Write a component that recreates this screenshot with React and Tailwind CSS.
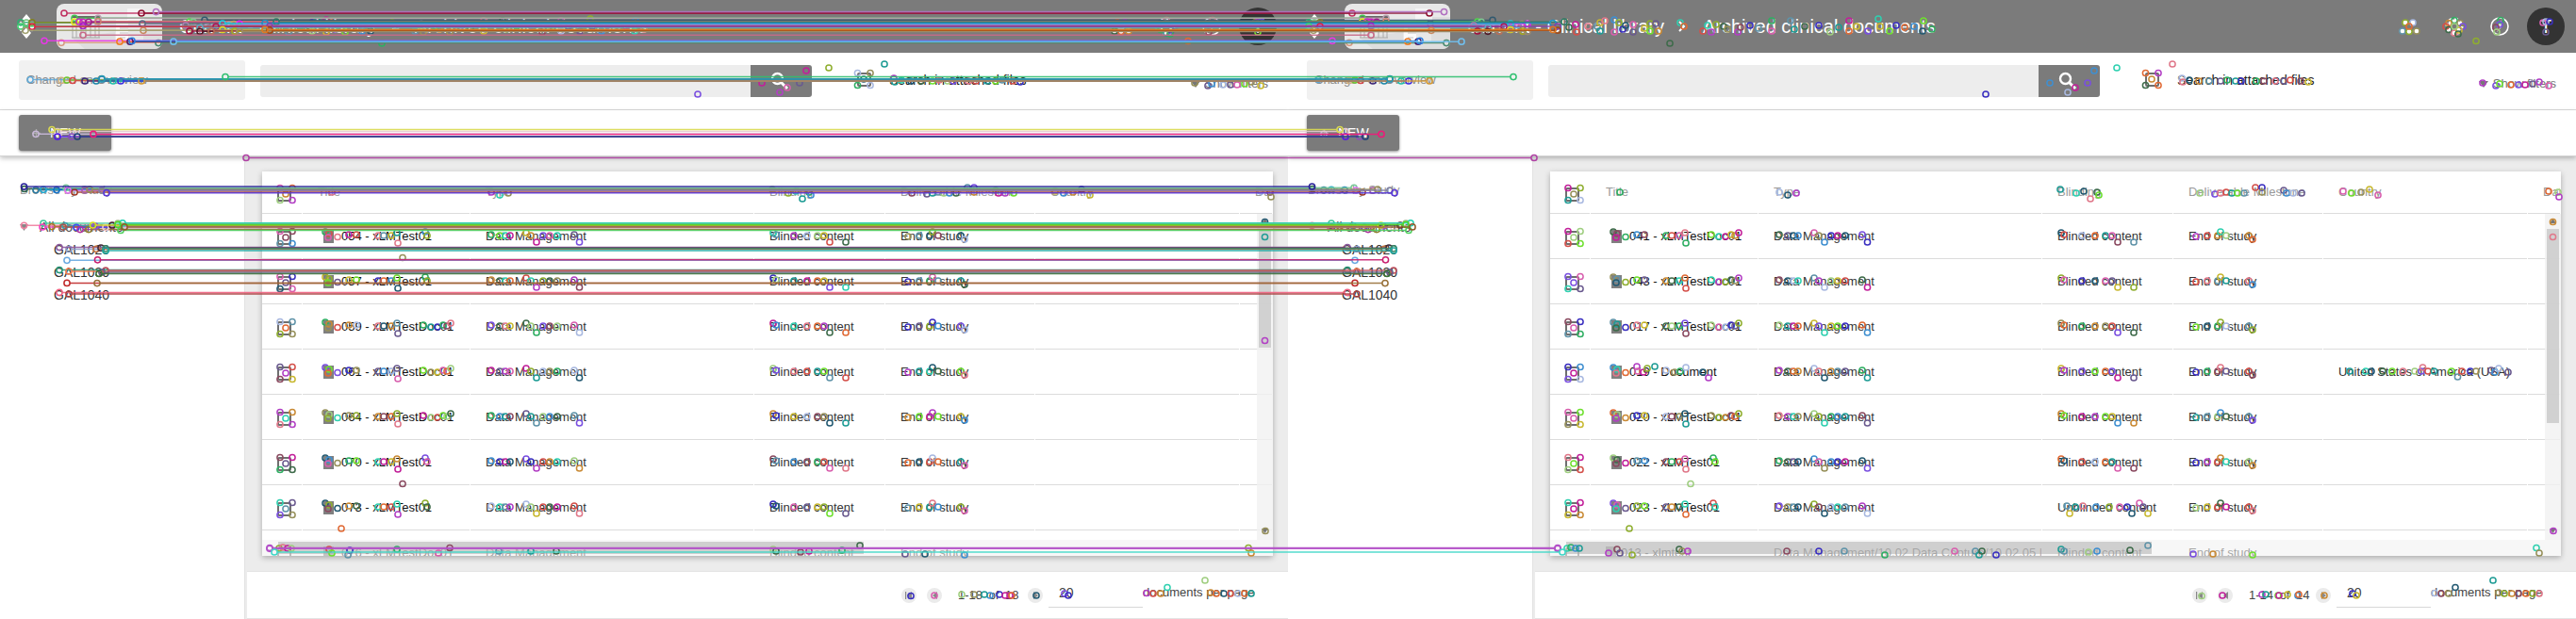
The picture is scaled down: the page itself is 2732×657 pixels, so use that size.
import React from "react";

const PANEL = 1366;

const PALETTE = [
  "#2fae62", "#b23fc4", "#3f8fd0", "#d4504a", "#8fae2f", "#7a4fe0", "#1f9c95", "#c98a35",
  "#d85fae", "#3e6b4a", "#a8b8e0", "#6fe02f", "#8a4a60", "#2fd0b0", "#3a2fc0", "#e0788a",
  "#96905a", "#c2209a", "#5f93a8", "#e06a35", "#6a5a8f", "#9fce80", "#245a72", "#c8b830",
];

// Matched keypoints: [x, y, colour]; each is joined to its twin in the second panel.
const MATCHES = [
  [68, 14, "#c03060"], [150, 14, "#8b1030"], [165.5, 12.6, "#b06fc0"],
  [79, 19.3, "#40c850"], [104, 19.3, "#b8a0b0"], [217, 21.4, "#31596f"], [201, 23, "#4fd84a"], [205, 23.3, "#80c890"],
  [22, 23.8, "#2fae72"], [28, 24, "#77c080"], [34, 23.8, "#808020"], [79, 23.2, "#e6e620"], [84, 23.2, "#c030c0"],
  [88, 23.4, "#d020c0"], [94, 23.3, "#a0208a"], [104, 22.8, "#d08070"], [243, 26.5, "#60b8d8"], [248, 25.5, "#c0a860"],
  [151, 25, "#5a6a80"], [254, 25.4, "#ee22ee"], [236, 25, "#20d0e0"], [293, 23.2, "#2f7a62"], [281, 24.6, "#1e8fc0"],
  [88, 27.5, "#a020c8"], [197, 27, "#a880b0"], [22, 28, "#3fd070"], [34, 28.2, "#dd2045"], [229, 28.3, "#b01050"],
  [286, 28, "#8a3fa8"], [212, 29.5, "#5fa8c0"], [236, 31.5, "#e0d820"], [152, 32.3, "#c88a60"], [27, 32.3, "#a0a070"],
  [201, 33, "#a01040"], [212, 33.3, "#501828"], [224, 33.2, "#b87058"], [249, 33.2, "#a8a820"], [254, 33.6, "#9a8a70"],
  [286, 32.2, "#a04a18"], [281, 31.4, "#e07820"], [88, 37.3, "#c86a88"],
  [65, 45.3, "#d89a80"], [168, 45.6, "#4a8a70"], [47, 43.3, "#e838e8"], [127, 44.2, "#f07a20"], [138, 44.2, "#501a68"],
  [140, 43.4, "#2a80e0"], [184, 44.2, "#70c0f0"],
  [32, 84.6, "#60a8d8"], [65, 85.4, "#d0b080"], [71, 85, "#70c830"], [77, 85.5, "#d84848"], [90, 86, "#402878"],
  [102, 86, "#2088a8"], [108, 84, "#2078b8"], [120, 86, "#20c0a8"], [128, 86, "#4030e0"], [150, 85.9, "#d49a35"],
  [108, 83.7, "#2898b0"], [239, 81.6, "#30c070"],
  [38, 142.3, "#c8b8d8"], [61, 139.5, "#e4c8d0"], [55, 137.5, "#dada50"], [61, 145, "#5018e8"], [76, 145, "#8a50b8"],
  [82, 145, "#204078"], [99, 142.4, "#f0187a"],
  [261, 167.5, "#b040a4"],
  [26, 200.5, "#28604a"], [38, 201.6, "#2878a0"], [46, 201.3, "#20a8d0"], [60, 201.6, "#1070c8"], [70, 199.3, "#78c898"],
  [72, 202, "#e070f0"], [79, 204, "#a03a28"], [90, 202, "#a860a0"], [95, 201, "#98905a"], [108, 202, "#8080a0"],
  [25.5, 198, "#28209a"], [113, 204.7, "#5a38d8"],
  [25.5, 239.3, "#f080a0"], [46, 237, "#40c898"], [45, 241, "#f040c0"], [55, 240.6, "#a87828"], [69, 239.5, "#38a0a8"],
  [67, 241, "#a05850"], [81, 241.3, "#4050f0"], [85, 243.6, "#b030a0"], [94, 243.6, "#908030"], [101, 240, "#9850c8"],
  [112, 241.3, "#f0c8d0"], [119, 239, "#482030"], [125, 237, "#a8b890"], [128, 244.5, "#50d060"], [98.5, 239, "#d8e020"],
  [130, 236.8, "#20d0b0"], [125, 238.4, "#50d828"], [132, 240.9, "#905a2a"],
  [73, 264.4, "#90a0c8"], [63, 262.5, "#905aa0"], [102, 264.3, "#c07040"], [107, 263.2, "#402838"], [112, 263.8, "#3a8868"], [112, 266, "#20a8a0"],
  [71, 276.3, "#68a8e0"], [103.5, 275.8, "#c82070"],
  [63, 286.5, "#289878"], [73, 288, "#f07850"], [112, 287, "#c05060"], [108, 289, "#606088"], [105, 290.4, "#3a7038"],
  [71, 300.4, "#c02828"], [103, 300.6, "#987038"],
  [63, 310.4, "#f06080"], [73, 312, "#a84040"],
  [286, 581.5, "#b350c8"], [286, 582.3, "#b350c8"], [291, 586, "#40d8c8"],
];

const HEADER_PTS = [
  [298, 29], [305, 26], [306, 34], [318, 28], [328, 28], [331, 24], [331, 33], [336, 22], [346, 21], [351, 24], [346, 34],
  [355, 31], [358, 27], [366, 26], [366, 34], [378, 30], [384, 25], [384, 33], [390, 25], [393, 33], [405, 46], [416, 24],
  [420, 28], [440, 33], [445, 27], [449, 34], [454, 26], [462, 28], [466, 31], [477, 34], [480, 29], [490, 27], [499, 30],
  [513, 22], [513, 33], [533, 22], [537, 31], [548, 28], [563, 27], [575, 34], [584, 29], [595, 22], [595, 33], [603, 28],
  [615, 33], [626, 20], [628, 28], [638, 33], [645, 27], [654, 29], [664, 28], [674, 22], [673, 33], [683, 31],
  [1185, 24], [1193, 24], [1182, 33], [1189, 33.5], [1197, 33], [1189, 28], [1237, 21.5], [1231, 24.5], [1243, 24.5],
  [1228, 28], [1246, 28], [1231, 31.5], [1237, 35], [1242, 32], [1241, 36], [1237, 28], [1286, 21.5], [1285, 26],
  [1281, 29], [1282, 34], [1331, 24], [1334, 23], [1338, 23], [1334, 34], [1260, 43.5],
];

const SEARCH_PTS = [
  [740, 100], [808, 88], [848, 88], [827, 98], [835, 93], [855, 75], [879, 72], [938, 68],
  [909.5, 77.5], [923, 77.5], [909.5, 90.5], [923, 90.5], [916, 84],
  [948, 83], [949, 87], [956, 85], [966, 86], [977, 86], [989, 86], [996, 85], [1005, 86], [1011, 86], [1027, 86],
  [1035, 86], [1047, 86], [1056, 86], [1063, 85], [1074, 86], [1082, 87],
  [1267, 88], [1281, 91], [1285, 89], [1297, 90], [1305, 90], [1312, 90], [1320, 89], [1327, 87], [1337, 91],
];

const TABLE_HEAD_PTS = [
  [297, 199.5], [310, 199.5], [297, 212.5], [310, 212.5], [303, 206], [352, 204], [521, 204], [530, 207], [539, 205],
  [819, 201], [836, 205], [844, 203], [858, 204], [860, 207], [851, 211],
  [967, 205], [983, 206], [989, 205], [995, 204], [1001, 205], [1007, 205], [1014, 205], [1026, 199], [1033, 199],
  [1033, 204], [1056, 202], [1059, 205], [1066, 205], [1075, 205],
  [1119, 203], [1128, 205], [1138, 204], [1147, 201], [1156, 207], [1337, 203], [1347, 204], [1348, 209],
];

const ROW_COMMON = [
  [297, 245.5], [310, 245.5], [297, 258.5], [310, 258.5], [303, 252], [345, 246], [349, 248], [348, 252], [358, 251.5],
  [521, 249], [530, 250], [536, 250], [541, 250], [558, 247], [563, 250], [569, 257], [576, 250], [583, 250], [591, 250],
  [609, 249], [614.5, 257], [963, 251], [975, 250], [986, 250], [989, 246], [995, 250], [1019, 250], [1023, 254],
];
const ROW_BLIND = [[820, 247], [823, 249], [842, 250], [856, 250], [867, 250], [874, 250], [880, 257], [897, 257]];
const ROW_UNBLIND = [[826, 249], [829, 257], [835, 250], [843, 249], [857, 250], [871, 250], [882, 250], [890, 250], [895, 257], [903, 246], [907, 250], [912, 257]];
const ROW_XLM = [[370, 249], [378, 249], [401, 250], [407, 250], [415, 250], [421, 247], [422, 258]];
const ROW_01 = [[451, 246], [453, 250]];
const ROW_DOC01 = [[449, 249], [457, 251], [464, 251], [470, 249], [474, 250], [478, 247]];
const ROW_DOCUMENT = [[370, 245], [371, 250], [377, 251], [381, 247], [389, 245], [401, 249], [410, 251], [416, 250], [422, 246], [440, 251], [446, 257]];
const USA_PTS = [
  [1126, 250], [1143, 250], [1149, 250], [1161, 250], [1171, 250], [1182.5, 250], [1195, 250], [1202, 250], [1203.5, 246],
  [1209, 250], [1215.5, 250], [1234, 250], [1240.5, 256], [1245, 250], [1254, 250], [1260, 250], [1276, 249], [1280, 251],
  [1284, 247], [1294, 251],
];
const TAIL_PTS = [
  [1341.5, 235.5], [1341.5, 251.5], [1342, 563.5], [1324, 581.5], [1327, 587], [427, 513.5], [362, 561],
  [296, 582], [300, 581], [305, 582], [309, 582], [349, 583], [352, 587], [820, 583], [823, 585], [849, 586], [858, 585],
  [893, 584], [912, 579], [960, 588], [981, 588], [1023, 589],
];
const PAGER_PTS = [
  [991, 632], [1033, 631], [1050, 632], [1060, 631], [1071, 632], [1099, 632], [1129, 630], [1133, 632],
  [1216, 629.5], [1223, 630], [1231, 630], [1238, 623.5], [1278, 616], [1284, 629], [1290, 630], [1298, 630],
  [1305, 630], [1313, 630], [1320, 630], [1327, 630],
];

const LEFT_ROWS = [
  { title: "054 - xLMTest01" }, { title: "057 - xLMTest01" }, { title: "059 - xLMTestDoc01" }, { title: "061 - xLMTestDoc01" },
  { title: "064 - xLMTestDoc01" }, { title: "070 - xLMTest01" }, { title: "073 - xLMTest01" }, { title: "076 - xLMTestDoc01" },
];
const RIGHT_ROWS = [
  { title: "041 - xLMTestDoc01" }, { title: "043 - xLMTestDoc01" }, { title: "017 - xLMTestDoc01" },
  { title: "019 - Document", country: "United States of America (USA)" }, { title: "020 - xLMTestDoc01" },
  { title: "022 - xLMTest01" }, { title: "023 - xLMTest01", blinding: "Unblinded content" },
  { title: "013 - xlmtest", type: "Data Management/10.02 Data Capture/10.02.05 |", shift: true },
];

function rowPoints(rows) {
  const out = [];
  rows.slice(0, 7).forEach((r, i) => {
    const sets = [ROW_COMMON, r.blinding ? ROW_UNBLIND : ROW_BLIND];
    if (r.title.endsWith("Document")) sets.push(ROW_DOCUMENT);
    else sets.push(ROW_XLM, r.title.includes("Doc") ? ROW_DOC01 : ROW_01);
    if (r.country) sets.push(USA_PTS);
    sets.flat().forEach(([x, y]) => out.push([x, y + 48 * i]));
  });
  return out;
}

const SHARED = [...HEADER_PTS, ...SEARCH_PTS, ...TABLE_HEAD_PTS, ...TAIL_PTS, ...PAGER_PTS];
const LEFT_PTS = [...SHARED, ...rowPoints(LEFT_ROWS), [427, 273.5], [1341.5, 361.5], [477, 581.5], [371, 584], [369, 589], [421, 583], [465, 587],
  [529, 585], [563, 585], [590, 585], [966, 632.5], [1020, 631], [1044, 631], [1066, 632], [1073, 632]];
const RIGHT_PTS = [...SHARED, ...rowPoints(RIGHT_ROWS), [340, 587], [365, 589], [415, 583], [418, 585], [424, 585], [529, 585], [563, 585], [590, 585],
  [633, 589], [707, 585], [729, 585], [733, 589], [736, 585], [751, 589], [969, 632.5], [1037, 631], [1051, 632], [1072, 631]];

function Keypoints({ points, dx, seed }) {
  return points.map(([x, y], i) => (
    <circle key={i} cx={x + dx} cy={y} r="3.1" stroke={PALETTE[(i * 7 + ((i * i) % 11) + seed) % PALETTE.length]} />
  ));
}

function MatchOverlay() {
  return (
    <svg className="pointer-events-none absolute inset-0 z-20" width="2732" height="657" viewBox="0 0 2732 657" fill="none" strokeWidth="1.5">
      <Keypoints points={LEFT_PTS} dx={0} seed={0} />
      <Keypoints points={RIGHT_PTS} dx={PANEL} seed={9} />
      {MATCHES.map(([x, y, c], i) => (
        <g key={i} stroke={c}>
          <path d={`M${x + 3} ${y}H${x + PANEL - 3}`} opacity="0.9" />
          <circle cx={x} cy={y} r="3.1" />
          <circle cx={x + PANEL} cy={y} r="3.1" />
        </g>
      ))}
    </svg>
  );
}

function Checkbox() {
  return <span className="box-border block size-[15px] rounded-[2px] border-2 border-[#6f6f6f]" />;
}

function LogoMark() {
  return (
    <svg width="20" height="26" viewBox="0 0 20 26" fill="#fff">
      <path d="M10 0l5 6-5 6-5-6zM10 14l5 6-5 6-5-6zM4 7.5l4.500 5.500L4 18.5 0 13zM16 7.5l4 5.500-4 5.500-4.500-5.500z" />
    </svg>
  );
}

function LogoCard() {
  return (
    <svg width="112" height="48" viewBox="0 0 112 48">
      <rect width="112" height="48" rx="8" fill="#e8e8e8" />
      <path d="M16 36L30 48H100Q112 48 112 40V14H92V41H62V30Z" fill="#dedede" />
      <path d="M75 5H88L93 11V18H75z" fill="#f4f4f4" />
      <path d="M63 17H76V37H82V41H63z" fill="#fafafa" />
      <path d="M67 26H76M67 31H76M67 36H73" stroke="#c4c4c4" strokeWidth="1.2" />
      <path d="M16 14H46" stroke="#666" strokeWidth="2" />
      <path d="M17 18V36M21 18V36M26 18V36M31 18V36M36 18V36M41 18V36M45 18V36M16 36H46" stroke="#aaa" strokeWidth="1" />
    </svg>
  );
}

function HeaderIcons() {
  return (
    <div className="flex items-center">
      <svg className="mr-[25px]" width="24" height="24" viewBox="0 0 24 24" fill="#fff">
        <circle cx="8" cy="8" r="2.8" /><circle cx="16" cy="8" r="2.8" />
        <circle cx="4.5" cy="17" r="3" /><circle cx="12" cy="17" r="3" /><circle cx="19.5" cy="17" r="3" />
      </svg>
      <svg className="mr-[27px]" width="22" height="22" viewBox="0 0 22 22" fill="none" stroke="#fff">
        <circle cx="11" cy="11" r="5.5" strokeWidth="4" />
        <circle cx="11" cy="11" r="8" strokeWidth="3" strokeDasharray="3.5 2.78" />
      </svg>
      <svg className="mr-[19px]" width="20" height="20" viewBox="0 0 20 20" fill="none" stroke="#fff" strokeWidth="1.6">
        <circle cx="10" cy="10" r="9" />
        <path d="M12 3.5L11.500 11.5L7 16L8.500 8.500z" fill="#ddd" stroke="none" />
      </svg>
      <div className="flex size-10 items-center justify-center rounded-full bg-[#333] text-[20px] text-white">T</div>
    </div>
  );
}

function TopBar() {
  return (
    <header className="flex h-14 items-center bg-[#7b7b7b] pr-3 pl-[18px] text-white">
      <LogoMark />
      <div className="ml-[22px]"><LogoCard /></div>
      <div className="ml-[18px] flex items-center text-[20px] leading-none whitespace-nowrap">
        <span className="w-[224px]">Current - Clinical library</span>
        <svg width="8" height="12" viewBox="0 0 8 12" fill="none" stroke="#fff" strokeWidth="2"><path d="M1 1l5 5-5 5" /></svg>
        <span className="ml-[18px]">Archived clinical documents</span>
      </div>
      <div className="ml-auto"><HeaderIcons /></div>
    </header>
  );
}

function SearchBar() {
  return (
    <div className="flex h-[61px] items-start border-b border-[#dcdcdc] bg-white pl-5">
      <div className="mt-2 flex h-[42px] w-60 items-center rounded-[3px] bg-[#f1f1f1] pl-2 text-[13px] text-[#8c8c8c]">Changed on Overview</div>
      <div className="mt-[13px] ml-4 h-[34px] w-[520px] rounded-l-[3px] bg-[#ededed]" />
      <div className="mt-[13px] flex h-[34px] w-[65px] items-center justify-center rounded-r-[3px] bg-[#7b7b7b]">
        <svg className="-ml-1" width="20" height="20" viewBox="0 0 20 20" fill="none" stroke="#fff" strokeWidth="2.4">
          <circle cx="7.5" cy="7.5" r="5.5" /><path d="M11.5 11.5L18 18" strokeWidth="3" />
        </svg>
      </div>
      <div className="mt-[21px] ml-[48px]"><Checkbox /></div>
      <div className="mt-[19px] ml-[19px] text-[14px] leading-5 whitespace-nowrap text-[#222]">Search in attached files</div>
      <div className="mt-[23px] mr-[21px] ml-auto flex items-center gap-[5px] text-[13px] leading-5 whitespace-nowrap text-[#777]">
        <svg width="10" height="7" viewBox="0 0 10 7" fill="#777"><path d="M0 0H10L5 7z" /></svg>
        Show filters
      </div>
    </div>
  );
}

function Sidebar() {
  return (
    <aside className="w-[259px] shrink-0 bg-white pt-[24px] text-[14px] leading-6">
      <div className="pl-[21px] text-[13px] text-[#999]">Browse by Study</div>
      <div className="mt-[15px] flex items-center pl-[21px] text-[#555]">
        <svg className="mr-3" width="9" height="7" viewBox="0 0 9 7" fill="#888"><path d="M0 0H9L4.500 7z" /></svg>
        <span>All documents</span>
      </div>
      <div className="pl-[57px] text-[#333]">
        <div>GAL1020</div>
        <div>GAL1030</div>
        <div>GAL1040</div>
      </div>
    </aside>
  );
}

const GRID = "grid grid-cols-[43px_178px_301px_139px_159px_217px_35px]";
const CELL = "flex items-center overflow-hidden whitespace-nowrap border-b border-[#dcdcdc] mr-px pl-4";

function Row({ row }) {
  return (
    <div className={`${GRID} h-12 shrink-0 text-[13px] text-[#333]`}>
      <div className={`${CELL} pt-1`}><Checkbox /></div>
      <div className={`${CELL} text-[#111]`}>
        <span className={row.shift ? "ml-0 h-[14px] w-[11px] shrink-0 bg-[#808080]" : "ml-[6px] h-[14px] w-[11px] shrink-0 bg-[#808080]"} />
        <span className={row.shift ? "ml-[5px]" : "ml-2"}>{row.title}</span>
      </div>
      <div className={CELL}>{row.type || "Data Management"}</div>
      <div className={CELL}>{row.blinding || "Blinded content"}</div>
      <div className={CELL}>End of study</div>
      <div className={CELL}>{row.country}</div>
      <div className={CELL} />
    </div>
  );
}

function Table({ rows, thumb }) {
  return (
    <div className="relative flex h-[408px] w-[1072px] flex-col overflow-hidden bg-white">
      <div className={`${GRID} h-[45px] shrink-0 text-[13px] text-[#999]`}>
        <div className={`${CELL} pt-1`}><Checkbox /></div>
        <div className={CELL}>Title</div>
        <div className={CELL}>Type</div>
        <div className={CELL}>Blinding</div>
        <div className={CELL}>Deliverable Milestone</div>
        <div className={CELL}>Country</div>
        <div className={CELL}>Date</div>
      </div>
      {rows.map((r) => <Row key={r.title} row={r} />)}
      <div className="absolute top-[45px] right-0 flex h-[346px] w-[17px] flex-col items-center bg-[#f1f1f1]/80 pt-[5px]">
        <svg className="mb-[6px] shrink-0" width="7" height="5" fill="#777"><path d="M0 5H7L3.500 0z" /></svg>
        <div className={`w-[13px] shrink-0 bg-[#c8c8c8]/80 ${thumb}`} />
        <svg className="mt-auto mb-[7px]" width="7" height="5" fill="#777"><path d="M0 0H7L3.500 5z" /></svg>
      </div>
      <div className="absolute bottom-0 left-0 flex h-[17px] w-full items-center bg-[#f1f1f1]/60 pl-[17px]">
        <div className="h-[13px] w-[621px] bg-[#a8a8a8]/50" />
      </div>
    </div>
  );
}

function PagerButton({ first, next, className }) {
  return (
    <span className={`flex size-[16px] shrink-0 items-center justify-center rounded-full bg-[#ebebeb] ${className || ""}`}>
      <svg width="8" height="8" viewBox="0 0 8 8" fill="#888">
        {first && <path d="M0 0H1.200V8H0z" />}
        <path d={next ? "M2 0L7 4L2 8z" : "M7 0L2 4L7 8z"} />
      </svg>
    </span>
  );
}

function Panel({ rows, total, thumb, pagerPad }) {
  return (
    <section className="flex h-[657px] w-[1366px] shrink-0 flex-col overflow-hidden bg-white">
      <TopBar />
      <SearchBar />
      <div className="relative z-10 h-[49px] shrink-0 border-b border-[#d4d4d4] bg-white pt-[5px] pl-5 shadow-[0_2px_5px_rgba(0,0,0,0.25)]">
        <div className="flex h-[38px] w-[98px] items-center rounded-[3px] bg-[#7b7b7b] pl-[14px] text-[14px] text-white shadow-[0_1px_3px_rgba(0,0,0,0.45)]">
          <svg width="9" height="9" viewBox="0 0 10 10" stroke="#aaa" strokeWidth="1.5"><path d="M5 0V10M0 5H10" /></svg>
          <span className="ml-[10px]">NEW</span>
        </div>
      </div>
      <div className="flex flex-1">
        <Sidebar />
        <main className="flex flex-1 flex-col border-l border-[#e2e2e2] bg-[#ececec]">
          <div className="mt-4 ml-[18px] w-[1072px] shadow-[0_2px_6px_rgba(0,0,0,0.28)]"><Table rows={rows} thumb={thumb} /></div>
          <div className={`mt-4 ml-[2px] flex h-[51px] items-center border-t border-b border-[#e4e4e4] bg-white text-[13px] text-[#444] ${pagerPad}`}>
            <PagerButton first />
            <PagerButton className="ml-[11px]" />
            <span className="ml-[17px] w-[64px] whitespace-nowrap [word-spacing:3px]">1-{total} of {total}</span>
            <span className="ml-auto flex w-[276px] items-center">
              <PagerButton next />
              <span className="mt-[-3px] ml-[6px] flex h-[29px] w-[100px] items-center self-end border-b border-[#d8d8d8] pl-[11px] text-[14px]">20</span>
              <span className="mt-[-6px] whitespace-nowrap">documents per page</span>
            </span>
          </div>
        </main>
      </div>
    </section>
  );
}

export default function App() {
  return (
    <div className="relative flex h-[657px] w-[2732px] overflow-hidden bg-white font-['Liberation_Sans',Arial,sans-serif]">
      <Panel rows={LEFT_ROWS} total={18} thumb="h-[126px]" pagerPad="pl-[694px]" />
      <Panel rows={RIGHT_ROWS} total={14} thumb="h-[206px]" pagerPad="pl-[697px]" />
      <MatchOverlay />
    </div>
  );
}
